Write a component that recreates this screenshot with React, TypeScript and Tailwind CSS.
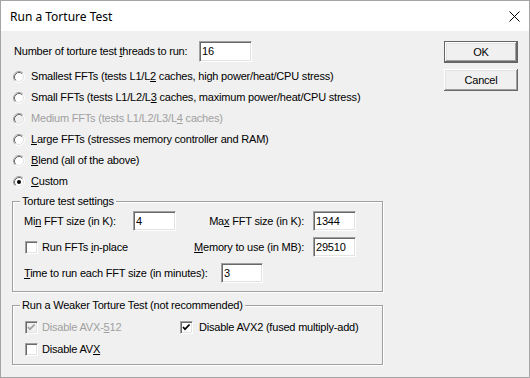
import React from "react";

const sunken =
  "border border-t-[#a0a0a0] border-l-[#a0a0a0] border-b-white border-r-white shadow-[inset_1px_1px_0_#696969,inset_-1px_-1px_0_#e3e3e3]";

function Radio({ checked, disabled }: { checked?: boolean; disabled?: boolean }) {
  return (
    <svg width="12" height="12" viewBox="0 0 12 12" className="shrink-0">
      <circle cx="6" cy="6" r="4.5" fill={disabled ? "#f0f0f0" : "#fff"} />
      <path d="M2.11 9.89 A5.5 5.5 0 0 1 9.89 2.11" stroke="#a0a0a0" fill="none" />
      <path d="M9.89 2.11 A5.5 5.5 0 0 1 2.11 9.89" stroke="#fff" fill="none" />
      <path d="M2.82 9.18 A4.5 4.5 0 0 1 9.18 2.82" stroke="#696969" fill="none" />
      <path d="M9.18 2.82 A4.5 4.5 0 0 1 2.82 9.18" stroke="#e3e3e3" fill="none" />
      {checked && <circle cx="6" cy="6" r="2" fill="#000" />}
    </svg>
  );
}

function Check({ checked, disabled }: { checked?: boolean; disabled?: boolean }) {
  return (
    <div
      className={`relative w-[13px] h-[13px] shrink-0 ${sunken} ${disabled ? "bg-[#f0f0f0]" : "bg-white"}`}
    >
      {checked && (
        <svg width="11" height="11" viewBox="0 0 11 11" className="absolute left-0 top-0">
          <polyline
            points="2,5 4,7.2 8.6,2.5"
            fill="none"
            stroke={disabled ? "#a0a0a0" : "#000"}
            strokeWidth="1.7"
          />
        </svg>
      )}
    </div>
  );
}

function Edit({ value, w }: { value: string; w: string }) {
  return (
    <div className={`${w} h-[20px] bg-white ${sunken} flex items-center pl-[2px] shrink-0`}>
      {value}
    </div>
  );
}

function U({ children }: { children: React.ReactNode }) {
  return <u className="underline underline-offset-[1px]">{children}</u>;
}

function Group({ title, children, cls }: { title: string; children: React.ReactNode; cls: string }) {
  return (
    <div
      className={`relative w-[371px] border border-[#a0a0a0] shadow-[inset_1px_1px_0_#fff,1px_1px_0_#fff] ${cls}`}
    >
      <div className="absolute left-[7px] top-[-7px] px-[2px] leading-[13px] bg-[#f0f0f0] whitespace-nowrap">{title}</div>
      {children}
    </div>
  );
}

export default function App() {
  return (
    <div className="w-[530px] h-[378px] border border-[#a5a5a5] bg-[#f0f0f0] flex flex-col overflow-hidden font-['Liberation_Sans',Arial,sans-serif] text-[11px] tracking-[-0.2px] leading-[13px] text-black">
      <div className="h-[30px] bg-white flex items-center justify-between pl-[9px] pr-[9px] shrink-0">
        <span className="font-['Noto_Sans',sans-serif] text-[12px] tracking-normal">Run a Torture Test</span>
        <svg width="11" height="11" viewBox="0 0 11 11">
          <path d="M0.5 0.5 L10.5 10.5 M10.5 0.5 L0.5 10.5" stroke="#000" strokeWidth="1" />
        </svg>
      </div>
      <div className="flex pl-[11px] pt-[10px]">
        <div className="w-[372px] flex flex-col">
          <div className="flex items-center h-[21px]">
            <div className="ml-[2px] w-[185px] whitespace-nowrap">
              Number of torture test <U>t</U>hreads to run:
            </div>
            <div className={`w-[53px] h-[21px] bg-white ${sunken} flex items-center pl-[2px]`}>16</div>
          </div>
          <div className="mt-[4px] flex flex-col whitespace-nowrap">
            <div className="h-[21px] flex items-center pl-[1px] gap-[6px]">
              <Radio />
              <span>
                Smallest FFTs (tests L1/L<U>2</U> caches, high power/heat/CPU stress)
              </span>
            </div>
            <div className="h-[21px] flex items-center pl-[1px] gap-[6px]">
              <Radio />
              <span>
                Small FFTs (tests L1/L2/L<U>3</U> caches, maximum power/heat/CPU stress)
              </span>
            </div>
            <div className="h-[21px] flex items-center pl-[1px] gap-[6px] text-[#a0a0a0]">
              <Radio disabled />
              <span>
                Medium FFTs (tests L1/L2/L3/L<U>4</U> caches)
              </span>
            </div>
            <div className="h-[21px] flex items-center pl-[1px] gap-[6px]">
              <Radio />
              <span>
                <U>L</U>arge FFTs (stresses memory controller and RAM)
              </span>
            </div>
            <div className="h-[21px] flex items-center pl-[1px] gap-[6px]">
              <Radio />
              <span>
                <U>B</U>lend (all of the above)
              </span>
            </div>
            <div className="h-[21px] flex items-center pl-[1px] gap-[6px]">
              <Radio checked />
              <span>
                <U>C</U>ustom
              </span>
            </div>
          </div>

          <Group title="Torture test settings" cls="mt-[9px] pt-[9px] pb-[8px] pl-[11px] flex flex-col gap-[6px] whitespace-nowrap">
            <div className="flex items-center h-[20px]">
              <div className="w-[109px]">
                Mi<U>n</U> FFT size (in K):
              </div>
              <Edit value="4" w="w-[43px]" />
              <div className="w-[137px] text-right pr-[9px]">
                Ma<U>x</U> FFT size (in K):
              </div>
              <Edit value="1344" w="w-[43px]" />
            </div>
            <div className="flex items-center h-[20px]">
              <div className="w-[152px] flex items-center pl-[1px]">
                <Check />
                <span className="ml-[4px]">
                  Run FFTs <U>i</U>n-place
                </span>
              </div>
              <div className="w-[137px] text-right pr-[9px]">
                <U>M</U>emory to use (in MB):
              </div>
              <Edit value="29510" w="w-[43px]" />
            </div>
            <div className="flex items-center h-[20px]">
              <div className="w-[197px]">
                <U>T</U>ime to run each FFT size (in minutes):
              </div>
              <Edit value="3" w="w-[42px]" />
            </div>
          </Group>

          <Group
            title="Run a Weaker Torture Test (not recommended)"
            cls="mt-[13px] pt-[11px] pb-[5px] pl-[11px] flex flex-col gap-[2px] whitespace-nowrap"
          >
            <div className="flex items-center h-[20px]">
              <div className="w-[156px] flex items-center pl-[1px] text-[#a0a0a0]">
                <Check checked disabled />
                <span className="ml-[4px]">
                  Disable AVX-<U>5</U>12
                </span>
              </div>
              <Check checked />
              <span className="ml-[6px]">Disable AVX2 (fused multiply-add)</span>
            </div>
            <div className="flex items-center h-[20px]">
              <div className="flex items-center pl-[1px]">
                <Check />
                <span className="ml-[4px]">
                  Disable AV<U>X</U>
                </span>
              </div>
            </div>
          </Group>
        </div>

        <div className="ml-[60px] flex flex-col gap-[6px]">
          <div className="w-[74px] h-[22px] border border-[#646464] flex">
            <div className="flex-1 flex items-center justify-center shadow-[inset_-1px_-1px_0_#696969,inset_1px_1px_0_#fff,inset_-2px_-2px_0_#a0a0a0,inset_2px_2px_0_#e3e3e3]">
              OK
            </div>
          </div>
          <div className="w-[74px] h-[22px] flex items-center justify-center shadow-[inset_-1px_-1px_0_#696969,inset_1px_1px_0_#fff,inset_-2px_-2px_0_#a0a0a0,inset_2px_2px_0_#e3e3e3]">
            Cancel
          </div>
        </div>
      </div>
    </div>
  );
}
